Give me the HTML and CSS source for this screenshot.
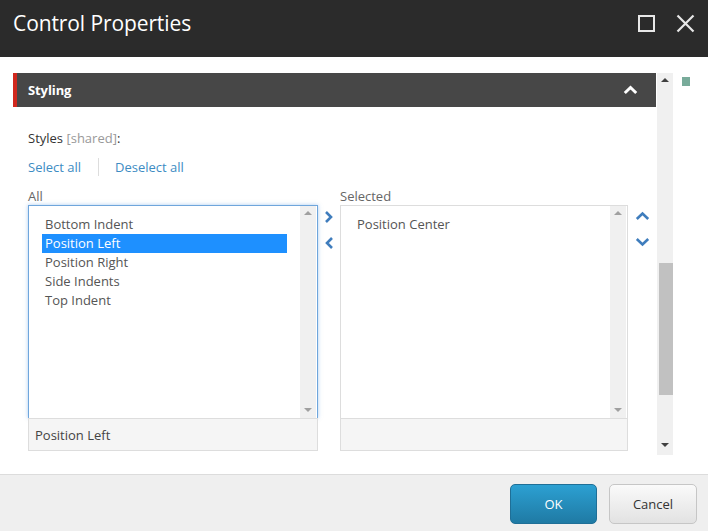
FILE: index.html
```html
<!DOCTYPE html>
<html>
<head>
<meta charset="utf-8">
<link rel="stylesheet" href="styles.css">
</head>
<body>
<div class="dialog">
  <div class="titlebar">
    <div class="title">Control Properties</div>
    <div class="win-icons">
      <svg class="ico-max" width="17" height="17" viewBox="0 0 17 17"><rect x="1" y="1" width="15" height="15" fill="none" stroke="#e8e8e8" stroke-width="2"/></svg>
      <svg class="ico-close" width="19" height="19" viewBox="0 0 19 19"><path d="M1.5 1.5 L17.5 17.5 M17.5 1.5 L1.5 17.5" stroke="#e8e8e8" stroke-width="2.2" fill="none"/></svg>
    </div>
  </div>
  <div class="main">
    <div class="scroller">
      <div class="panel">
        <div class="section-head">
          <span class="section-title">Styling</span>
          <svg width="15" height="10" viewBox="0 0 15 10"><polyline points="1.8,8 7.5,2.5 13.2,8" fill="none" stroke="#fff" stroke-width="3"/></svg>
        </div>
        <div class="section-body">
          <div class="field-label">Styles <span class="muted">[shared]</span>:</div>
          <div class="links">
            <a class="link">Select all</a>
            <span class="divider"></span>
            <a class="link">Deselect all</a>
          </div>
          <div class="lists">
            <div class="col">
              <div class="col-label">All</div>
              <div class="listbox active">
                <div class="list-inner">
                  <div class="items">
                    <div class="item">Bottom Indent</div>
                    <div class="item selected">Position Left</div>
                    <div class="item">Position Right</div>
                    <div class="item">Side Indents</div>
                    <div class="item">Top Indent</div>
                  </div>
                  <div class="vscroll"><span class="tri-up"></span><span class="tri-down"></span></div>
                </div>
              </div>
              <div class="list-foot">Position Left</div>
            </div>
            <div class="move-btns">
              <svg width="10" height="14" viewBox="0 0 10 14"><polyline points="2,2 7,7 2,12" fill="none" stroke="#3f7dbd" stroke-width="2.6"/></svg>
              <svg width="10" height="14" viewBox="0 0 10 14"><polyline points="8,2 3,7 8,12" fill="none" stroke="#3f7dbd" stroke-width="2.6"/></svg>
            </div>
            <div class="col col-right">
              <div class="col-label">Selected</div>
              <div class="listbox">
                <div class="list-inner">
                  <div class="items">
                    <div class="item">Position Center</div>
                  </div>
                  <div class="vscroll"><span class="tri-up"></span><span class="tri-down"></span></div>
                </div>
              </div>
              <div class="list-foot"></div>
            </div>
            <div class="order-btns">
              <svg width="15" height="10" viewBox="0 0 15 10"><polyline points="1.8,8 7.5,2.5 13.2,8" fill="none" stroke="#3f7dbd" stroke-width="2.6"/></svg>
              <svg width="15" height="10" viewBox="0 0 15 10"><polyline points="1.8,2 7.5,7.5 13.2,2" fill="none" stroke="#3f7dbd" stroke-width="2.6"/></svg>
            </div>
          </div>
        </div>
      </div>
      <div class="scrollbar">
        <span class="sb-up"></span>
        <span class="sb-thumb"></span>
        <span class="sb-down"></span>
      </div>
    </div>
    <div class="marker"></div>
  </div>
  <div class="footer">
    <button class="btn btn-primary">OK</button>
    <button class="btn btn-default">Cancel</button>
  </div>
</div>
</body>
</html>
```
FILE: styles.css
```css
html, body {
  margin: 0;
  padding: 0;
  background: #fff;
}
body {
  font-family: "Open Sans", "Noto Sans", sans-serif;
  font-size: 13px;
  color: #333;
  width: 708px;
  height: 531px;
  overflow: hidden;
}
.dialog {
  display: flex;
  flex-direction: column;
  height: 531px;
}
.titlebar {
  height: 57px;
  background: #2b2b2b;
  display: flex;
  justify-content: space-between;
  box-sizing: border-box;
  padding: 8px 13px 0 13px;
}
.title {
  color: #fff;
  font-size: 21px;
  line-height: 30px;
  letter-spacing: -0.1px;
}
.win-icons {
  display: flex;
  gap: 21px;
  padding-top: 7px;
  align-items: flex-start;
}
.ico-close {
  margin-top: -1px;
}
.main {
  flex: 1;
  display: flex;
  padding: 16px 0 0 13px;
}
.scroller {
  display: flex;
  height: 382px;
  gap: 1px;
}
.panel {
  width: 643px;
  display: flex;
  flex-direction: column;
}
.section-head {
  height: 34px;
  background: #474747;
  border-left: 4px solid #d0281e;
  display: flex;
  align-items: center;
  justify-content: space-between;
  padding: 0 18px 1px 11px;
  box-sizing: border-box;
}
.section-title {
  color: #fff;
  font-weight: 700;
  font-size: 13px;
  letter-spacing: -0.1px;
}
.section-body {
  padding: 22px 0 0 15px;
}
.field-label {
  line-height: 18px;
  color: #333;
}
.muted {
  color: #999;
}
.links {
  display: flex;
  align-items: center;
  margin-top: 11px;
  height: 18px;
}
.link {
  color: #3d8cc3;
  line-height: 18px;
}
.divider {
  width: 1px;
  height: 18px;
  background: #ddd;
  margin: 0 16px 0 17px;
}
.lists {
  display: flex;
  margin-top: 11px;
}
.col {
  display: flex;
  flex-direction: column;
  width: 290px;
}
.col-right {
  width: 288px;
}
.col-label {
  line-height: 18px;
  color: #666;
}
.listbox {
  height: 213px;
  box-sizing: border-box;
  border: 1px solid #ddd;
  border-bottom: none;
  background: #fff;
}
.listbox.active {
  border-color: #6fa6dc;
  box-shadow: 0 0 4px rgba(102, 160, 225, 0.55);
}
.list-inner {
  display: flex;
  height: 100%;
}
.items {
  flex: 1;
  padding: 9px 13px 0 13px;
}
.item {
  height: 19px;
  line-height: 19px;
  padding-left: 3px;
  color: #555;
}
.item.selected {
  background: #1e90ff;
  color: #fff;
}
.vscroll {
  width: 16px;
  background: #f0f0f0;
  margin-right: 1px;
  display: flex;
  flex-direction: column;
  justify-content: space-between;
  align-items: center;
  padding: 5px 0 6px;
}
.tri-up {
  width: 0;
  height: 0;
  border-left: 4px solid transparent;
  border-right: 4px solid transparent;
  border-bottom: 4px solid #a0a0a0;
}
.tri-down {
  width: 0;
  height: 0;
  border-left: 4px solid transparent;
  border-right: 4px solid transparent;
  border-top: 4px solid #a0a0a0;
}
.list-foot {
  height: 33px;
  box-sizing: border-box;
  background: #f5f5f5;
  border: 1px solid #ddd;
  padding-left: 6px;
  line-height: 33px;
  color: #444;
}
.move-btns {
  width: 22px;
  display: flex;
  flex-direction: column;
  align-items: center;
  gap: 12px;
  padding-top: 23px;
}
.order-btns {
  width: 28px;
  display: flex;
  flex-direction: column;
  align-items: center;
  gap: 16px;
  padding-top: 24px;
}
.scrollbar {
  width: 16px;
  background: #f0f0f0;
  display: flex;
  flex-direction: column;
  align-items: center;
}
.sb-up {
  margin-top: 5px;
  width: 0;
  height: 0;
  border-left: 4px solid transparent;
  border-right: 4px solid transparent;
  border-bottom: 4px solid #404040;
}
.sb-thumb {
  margin-top: 181px;
  margin-left: 2px;
  width: 14px;
  height: 132px;
  background: #c1c1c1;
}
.sb-down {
  margin-top: 48px;
  width: 0;
  height: 0;
  border-left: 4px solid transparent;
  border-right: 4px solid transparent;
  border-top: 4px solid #404040;
}
.marker {
  width: 8px;
  height: 9px;
  background: #78ab9a;
  margin: 4px 0 0 9px;
}
.footer {
  height: 57px;
  box-sizing: border-box;
  background: #efefef;
  border-top: 1px solid #dcdcdc;
  display: flex;
  justify-content: flex-end;
  align-items: flex-start;
  gap: 12px;
  padding: 9px 11px 0 0;
}
.btn {
  font-family: "Open Sans", "Noto Sans", sans-serif;
  font-size: 13px;
  height: 40px;
  border-radius: 5px;
  cursor: pointer;
  box-sizing: border-box;
}
.btn-primary {
  width: 87px;
  color: #fff;
  border: 1px solid #1f6f97;
  background: linear-gradient(#2ca0d2, #1f7aa4);
}
.btn-default {
  width: 88px;
  color: #333;
  border: 1px solid #c6c6c6;
  background: linear-gradient(#fafafa, #e2e2e2);
}
```
